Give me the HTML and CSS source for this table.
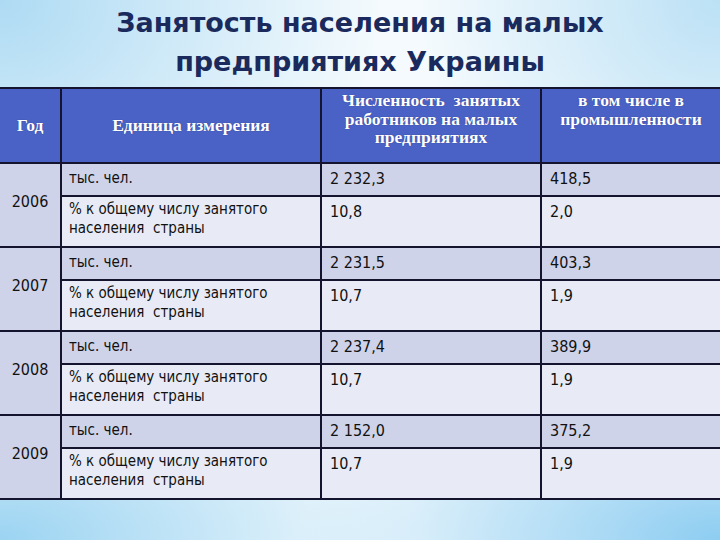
FILE: index.html
```html
<!DOCTYPE html>
<html lang="ru">
<head>
<meta charset="utf-8">
<title>Занятость населения на малых предприятиях Украины</title>
<link rel="stylesheet" href="styles.css">
</head>
<body>
<div class="slide">
  <h1 class="title">Занятость населения на малых<br>предприятиях Украины</h1>
  <table class="data">
    <colgroup>
      <col class="c-year"><col class="c-unit"><col class="c-total"><col class="c-ind">
    </colgroup>
    <thead>
      <tr>
        <th class="mid">Год</th>
        <th class="mid">Единица измерения</th>
        <th class="top">Численность&nbsp; занятых работников на малых предприятиях</th>
        <th class="top">в том числе в промышленности</th>
      </tr>
    </thead>
    <tbody>
      <tr class="r-abs"><td class="year" rowspan="2">2006</td><td class="unit">тыс. чел.</td><td class="num">2 232,3</td><td class="num">418,5</td></tr>
      <tr class="r-pct"><td class="unit">% к общему числу занятого<br>населения&nbsp; страны</td><td class="num">10,8</td><td class="num">2,0</td></tr>
      <tr class="r-abs"><td class="year" rowspan="2">2007</td><td class="unit">тыс. чел.</td><td class="num">2 231,5</td><td class="num">403,3</td></tr>
      <tr class="r-pct"><td class="unit">% к общему числу занятого<br>населения&nbsp; страны</td><td class="num">10,7</td><td class="num">1,9</td></tr>
      <tr class="r-abs"><td class="year" rowspan="2">2008</td><td class="unit">тыс. чел.</td><td class="num">2 237,4</td><td class="num">389,9</td></tr>
      <tr class="r-pct"><td class="unit">% к общему числу занятого<br>населения&nbsp; страны</td><td class="num">10,7</td><td class="num">1,9</td></tr>
      <tr class="r-abs"><td class="year" rowspan="2">2009</td><td class="unit">тыс. чел.</td><td class="num">2 152,0</td><td class="num">375,2</td></tr>
      <tr class="r-pct"><td class="unit">% к общему числу занятого<br>населения&nbsp; страны</td><td class="num">10,7</td><td class="num">1,9</td></tr>
    </tbody>
  </table>
</div>
</body>
</html>
```
FILE: styles.css
```css
html, body {
  margin: 0;
  padding: 0;
}
body {
  width: 720px;
  height: 540px;
  overflow: hidden;
  background:
    radial-gradient(ellipse 380px 300px at 0% 0%, rgba(150, 208, 240, 0.75), rgba(150, 208, 240, 0) 100%),
    radial-gradient(ellipse 300px 260px at 100% 0%, rgba(150, 208, 240, 0.6), rgba(150, 208, 240, 0) 100%),
    radial-gradient(ellipse 420px 200px at 0% 100%, rgba(140, 205, 240, 0.85), rgba(140, 205, 240, 0) 100%),
    radial-gradient(ellipse 420px 200px at 100% 100%, rgba(130, 200, 240, 0.9), rgba(130, 200, 240, 0) 100%),
    #f4fafd;
}
.slide {
  display: flex;
  flex-direction: column;
  align-items: stretch;
}
.title {
  margin: 0;
  padding-top: 3px;
  height: 87px;
  box-sizing: border-box;
  text-align: center;
  font-family: "DejaVu Sans", sans-serif;
  font-weight: bold;
  font-size: 27px;
  line-height: 39px;
  color: #1b2a5c;
}
.data {
  margin-left: -2px;
  width: 722px;
  border-collapse: collapse;
  table-layout: fixed;
}
.c-year { width: 62px; }
.c-unit { width: 260px; }
.c-total { width: 220px; }
.c-ind { width: 180px; }
.data th, .data td {
  border: 2px solid #14142e;
  padding: 0;
}
.data th {
  background: #4a62c6;
  color: #ffffff;
  font-family: "Liberation Serif", serif;
  font-weight: bold;
  font-size: 17.5px;
  line-height: 18.5px;
  height: 71px;
  text-shadow: 0 0 1px rgba(20, 30, 80, 0.6);
}
.data th.mid {
  vertical-align: middle;
}
.data th.top {
  vertical-align: top;
  padding: 2px 4px 0;
}
.data td {
  font-family: "DejaVu Sans Condensed", "DejaVu Sans", sans-serif;
  color: #111111;
  vertical-align: top;
}
.r-abs td {
  background: #cfd3ea;
  height: 26px;
}
.r-pct td {
  background: #e8ebf6;
  height: 44px;
}
.data td.year {
  background: #cfd3ea;
  vertical-align: middle;
  text-align: center;
  font-size: 16px;
  padding-bottom: 8px;
}
.data td.unit {
  font-size: 15px;
  line-height: 19px;
  padding: 3px 6px 0 7px;
}
.r-abs td.unit {
  padding-top: 5px;
}
.data td.num {
  font-size: 16px;
  line-height: 19px;
  padding: 5px 8px 0 8px;
}
```
